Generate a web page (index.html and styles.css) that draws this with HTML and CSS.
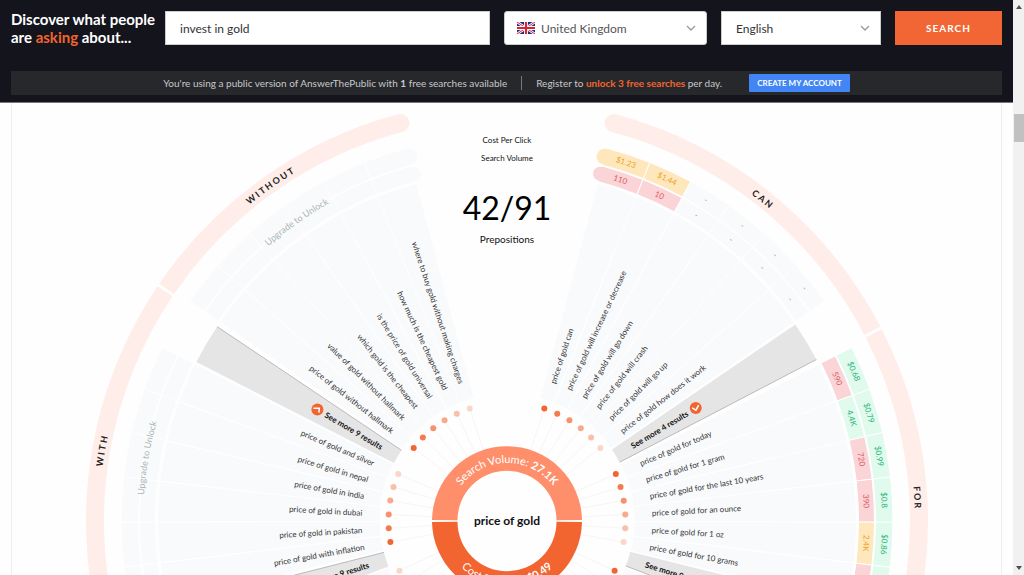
FILE: index.html
```
<!DOCTYPE html>
<html lang="en">
<head>
  <meta charset="UTF-8">
  <meta name="viewport" content="width=device-width, initial-scale=1.0">
  <title>AnswerThePublic - invest in gold</title>
  <link rel="stylesheet" href="styles.css">
</head>
<body>
  <div class="page">
    <header class="header">
      <form class="search">
        <h1 class="tagline">Discover what people<br>are <span class="accent">asking</span> about...</h1>
        <input class="field keyword" type="text" value="invest in gold" aria-label="Keyword">
        <label class="field select country">
          <svg class="flag" viewBox="0 0 18 12" aria-hidden="true">
            <rect width="18" height="12" fill="#1f2f7a"/>
            <path d="M0 0L18 12M18 0L0 12" stroke="#fff" stroke-width="2.6"/>
            <path d="M0 0L18 12M18 0L0 12" stroke="#d8233c" stroke-width="1"/>
            <path d="M9 0V12M0 6H18" stroke="#fff" stroke-width="4"/>
            <path d="M9 0V12M0 6H18" stroke="#d8233c" stroke-width="2.2"/>
          </svg>
          <select aria-label="Country"><option>United Kingdom</option></select>
          <svg class="chevron" viewBox="0 0 10 6" aria-hidden="true"><path d="M1 1l4 4 4-4"/></svg>
        </label>
        <label class="field select language">
          <select aria-label="Language"><option>English</option></select>
          <svg class="chevron" viewBox="0 0 10 6" aria-hidden="true"><path d="M1 1l4 4 4-4"/></svg>
        </label>
        <button class="search-btn" type="submit">SEARCH</button>
      </form>
      <div class="notice">
        <p class="notice-left">You're using a public version of AnswerThePublic with <b>1</b> free searches available</p>
        <p class="notice-right">Register to <b class="accent">unlock 3 free searches</b> per day.</p>
        <button class="account-btn" type="button">CREATE MY ACCOUNT</button>
      </div>
    </header>
    <main class="results">
      <svg id="wheel" class="wheel" viewBox="-422 -418 844 844" role="img" aria-label="Prepositions"></svg>
    </main>
  </div>
  <div class="scrollbar" aria-hidden="true">
    <svg class="arrow" viewBox="0 0 6 4"><path d="M0 4L3 0L6 4Z"/></svg>
    <div class="track"><div class="thumb"></div></div>
    <svg class="arrow" viewBox="0 0 6 4"><path d="M0 0L3 4L6 0Z"/></svg>
  </div>
  <script src="wheel.js"></script>
</body>
</html>
```
FILE: styles.css
```
* { box-sizing: border-box; }
body { display: flex; height: 100vh; margin: 0; overflow: hidden; background: #fefefe; color: #222; font-family: Lato, "Open Sans", sans-serif; }
h1, p { margin: 0; }
input, select, button { font-family: inherit; }
.page { display: flex; flex: 1; flex-direction: column; min-width: 0; }
.accent { color: #f26430; }

/* header */
.header { padding: 11px 11px 7px; background: #14141d; border-bottom: 1px solid #77777c; }
.search { display: flex; align-items: center; height: 34px; gap: 14px; }
.tagline { width: 140px; color: #fff; font-size: 15px; line-height: 18px; white-space: nowrap; }
.field { height: 34px; border: 1px solid #ccc; background: #fff; color: #333; font-size: 12px; }
.keyword { flex: 1; min-width: 0; padding: 0 14px; }
.select { display: flex; align-items: center; padding: 0 10px 0 14px; }
.select select { flex: 1; min-width: 0; padding: 0; border: 0; background: none; color: inherit; font-size: 12px; appearance: none; }
.country { width: 203px; padding-left: 12px; gap: 6px; border-radius: 3px; color: #555; }
.language { width: 160px; }
.flag { width: 18px; height: 12px; }
.chevron { width: 10px; height: 6px; fill: none; stroke: #999; stroke-width: 1.3px; }
.search-btn { width: 107px; height: 34px; border: 0; background: #f26535; color: #fff; font-size: 10px; font-weight: 700; letter-spacing: 1px; }
.notice { display: flex; align-items: center; justify-content: center; height: 24px; margin-top: 26px; background: #27282c; color: #c8c8ca; font-size: 10px; line-height: 14px; white-space: nowrap; }
.notice-left { padding-right: 14px; border-right: 1px solid #77777c; }
.notice-right { padding: 0 27px 0 14px; }
.account-btn { height: 18px; padding: 0 8px; border: 0; border-radius: 1px; background: #4285f4; color: #fff; font-size: 8px; font-weight: 700; }

/* results */
.results { display: flex; flex: 1; justify-content: center; min-height: 0; margin: 0 11px; overflow: hidden; border: solid #eee; border-width: 0 1px; }
.wheel { flex: none; width: 844px; height: 844px; }
.wheel text { fill: #333; font-size: 8px; }
.wheel a { text-decoration: none; }
.band { fill: #ffede9; }
.blank { fill: #f9fafc; }
.low { fill: #fad4d6; }
.mid { fill: #ffe7bd; }
.high { fill: #e0faee; }
.cell { stroke: #fff; stroke-width: 1px; }
.more { fill: #e5e5e5; }
.more-edge { stroke: #bbb; }
.spoke { stroke: #f8f5f4; }
.dot, .more-icon { fill: #f26430; }
.more-arrow { fill: none; stroke: #fff; stroke-width: 1.5px; }
.ring-top { fill: #ff8f6b; }
.ring-bottom { fill: #f26430; }
.wheel .more-text { fill: #111; font-weight: 700; }
.wheel .value { font-size: 8px; text-anchor: middle; }
.wheel .value-low { fill: #e0585f; }
.wheel .value-mid { fill: #eba41c; }
.wheel .value-high { fill: #23b573; }
.wheel .value-blank { fill: #999; }
.wheel .band-text { fill: #222; font-size: 9px; font-weight: 700; letter-spacing: 2px; text-anchor: middle; }
.wheel .unlock { fill: #a9b5b5; font-size: 9px; text-anchor: middle; }
.wheel .ring-text { fill: #fff; font-size: 11px; text-anchor: middle; }
.ring-text .strong { font-weight: 700; }
.wheel .middle { fill: #111; text-anchor: middle; }
.wheel .key { font-size: 8px; }
.wheel .count { fill: #000; font-size: 32px; font-weight: 400; }
.wheel .kind { font-size: 10px; }
.wheel .term { font-size: 12px; font-weight: 700; }

/* scrollbar */
.scrollbar { display: flex; flex: none; flex-direction: column; align-items: center; justify-content: space-between; width: 11px; padding: 5px 0; background: #f1f1f1; }
.arrow { width: 6px; height: 4px; fill: #505050; }
.track { flex: 1; width: 100%; padding: 105px 0 0 1px; }
.thumb { height: 28px; background: #c1c1c1; }
```
FILE: wheel.js
```
const STEP = 6.72;

// angles are degrees clockwise from the top
const groups = [
  { name: 'CAN', start: 15, band: [15, 62.5], more: 4, round: true, items: [
    ['price of gold can', '$1.23', 'mid', '110', 'low'],
    ['price of gold will increase or decrease', '$1.44', 'mid', '10', 'low'],
    ['price of gold will go down', '-', 'blank', '-', 'blank'],
    ['price of gold will crash', '-', 'blank', '-', 'blank'],
    ['price of gold will go up', '-', 'blank', '-', 'blank'],
    ['price of gold how does it work', '-', 'blank', '-', 'blank']
  ] },
  { name: 'FOR', start: 63.3, band: [62.9, 110.8], more: 9, items: [
    ['price of gold for today', '$0.68', 'high', '590', 'low'],
    ['price of gold for 1 gram', '$0.79', 'high', '4.4K', 'high'],
    ['price of gold for the last 10 years', '$0.99', 'high', '720', 'low'],
    ['price of gold for an ounce', '$0.8', 'high', '390', 'low'],
    ['price of gold for 1 oz', '$0.86', 'high', '2.4K', 'mid'],
    ['price of gold for 10 grams', '', 'high', '', 'low']
  ] },
  { name: 'WITH', start: -103.6, band: [-104, -56.1], more: 9, items: [
    ['price of gold with inflation'],
    ['price of gold in pakistan'],
    ['price of gold in dubai'],
    ['price of gold in india'],
    ['price of gold in nepal'],
    ['price of gold and silver']
  ] },
  { name: 'WITHOUT', start: -55.3, band: [-55.7, -15], end: true, items: [
    ['price of gold without hallmark'],
    ['value of gold without hallmark'],
    ['which gold is the cheapest'],
    ['is the price of gold universal'],
    ['how much is the cheapest gold'],
    ['where to buy gold without making charges']
  ] }
];

function point(r, deg) {
  const a = deg * Math.PI / 180;
  return (r * Math.sin(a)).toFixed(2) + ' ' + (-r * Math.cos(a)).toFixed(2);
}

function sector(r1, r2, from, to, cls) {
  return `<path class="${cls}" d="M${point(r1, from)}L${point(r2, from)}A${r2} ${r2} 0 0 1 ${point(r2, to)}L${point(r1, to)}A${r1} ${r1} 0 0 0 ${point(r1, from)}Z"/>`;
}

function circle(r, deg, size, cls, opacity = 1) {
  const [x, y] = point(r, deg).split(' ');
  return `<circle class="${cls}" cx="${x}" cy="${y}" r="${size}" opacity="${opacity}"/>`;
}

function spoke(r1, r2, deg, cls) {
  return `<path class="${cls}" d="M${point(r1, deg)}L${point(r2, deg)}"/>`;
}

function label(text, deg, cls) {
  const left = deg < 0;
  return `<a href="#"><text class="${cls}" transform="rotate(${left ? deg + 90 : deg - 90})" x="${left ? -145 : 145}" y="3" text-anchor="${left ? 'end' : 'start'}">${text}</text></a>`;
}

function value(text, r, deg, level) {
  return `<text class="value value-${level}" transform="rotate(${deg})" y="${-r}">${text}</text>`;
}

let arcs = 0;
function curved(html, r, deg, cls, below) {
  const id = 'arc' + arcs++;
  const span = below ? -80 : 80;
  return `<path id="${id}" fill="none" d="M${point(r, deg - span)}A${r} ${r} 0 0 ${below ? 0 : 1} ${point(r, deg + span)}"/>
    <text class="${cls}"><textPath href="#${id}" startOffset="50%">${html}</textPath></text>`;
}

function drawMore(count, deg, edge) {
  const left = deg < 0;
  const from = deg - STEP / 2, to = deg + STEP / 2;
  return sector(127, 349, from, to, 'more')
    + spoke(127, 349, edge, 'more-edge')
    + label(`See more ${count} results`, deg, 'more-text')
    + circle(220, deg, 6, 'more-icon')
    + `<g transform="rotate(${left ? deg + 90 : deg - 90}) translate(${left ? -220 : 220} 0)"><path class="more-arrow" d="${left ? 'M-4 1L1 -2L3 2' : 'M-3 -2L-1 2L4 -1'}"/></g>`;
}

// rounded tips of the band and of the two value rings
function caps(deg, cpcLevel, volumeLevel) {
  return circle(412, deg, 9, 'band') + circle(377.2, deg, 8, cpcLevel) + circle(359.5, deg, 7, volumeLevel);
}

function drawGroup(g) {
  const last = g.start + STEP * 6;
  const end = g.more ? last + STEP : last;
  let out = sector(403, 421, g.band[0], g.band[1], 'band');

  g.items.forEach((item, i) => {
    const [text, cpc, cpcLevel = 'blank', volume, volumeLevel = 'blank'] = item;
    const from = g.start + i * STEP, to = from + STEP, mid = from + STEP / 2;
    out += sector(127, 349.5, from, to, 'blank cell');
    out += sector(351.5, 367.5, from, to, volumeLevel + ' cell');
    out += sector(368.5, 386, from, to, cpcLevel + ' cell');
    out += spoke(75, 118, mid, 'spoke');
    out += circle(118.5, mid, 3, 'dot', [1, 0.85, 0.7, 0.55, 0.4, 0.25][i]);
    out += label(text, mid, '');
    if (cpc) out += value(cpc, 375, mid, cpcLevel) + value(volume, 357, mid, volumeLevel);
  });

  if (g.round) out += caps(g.start, g.items[0][2], g.items[0][4]);
  if (g.end) out += caps(last, 'blank', 'blank');
  if (g.more) out += drawMore(g.more, last + STEP / 2 + 0.4, end + 0.4);
  if (g.start < 0) out += curved('Upgrade to Unlock', 364, (g.start + end) / 2, 'unlock');
  out += curved(g.name, 408, (g.start + end) / 2, 'band-text');
  return out;
}

let html = groups.map(drawGroup).join('');

// first slots of the groups further down
[1, 2, 3].forEach(i => {
  const deg = 111.4 + STEP * (i - 0.5);
  html += sector(127, 350, deg - STEP / 2, deg + STEP / 2, 'blank cell') + sector(127, 350, -deg - STEP / 2, -deg + STEP / 2, 'blank cell');
  html += spoke(75, 118, deg, 'spoke') + spoke(75, 118, -deg, 'spoke');
  html += circle(118.5, deg, 3, 'dot', 1.15 - i * 0.15) + circle(118.5, -deg, 3, 'dot', 0.1 + i * 0.15);
});
html += drawMore(9, -107.6, -104.3);

html += sector(49.5, 75, -89.2, 89.2, 'ring-top') + sector(49.5, 75, 90.8, 269.2, 'ring-bottom');
html += curved('Search Volume: <tspan class="strong">27.1K</tspan>', 58, 0, 'ring-text');
html += curved('Cost Per Click: <tspan class="strong">$0.49</tspan>', 65, 180, 'ring-text', true);

html += '<text class="middle key" y="-378">Cost Per Click</text>';
html += '<text class="middle key" y="-360">Search Volume</text>';
html += '<text class="middle count" y="-301">42/91</text>';
html += '<text class="middle kind" y="-278">Prepositions</text>';
html += '<text class="middle term" y="4">price of gold</text>';

document.getElementById('wheel').innerHTML = html;
```
